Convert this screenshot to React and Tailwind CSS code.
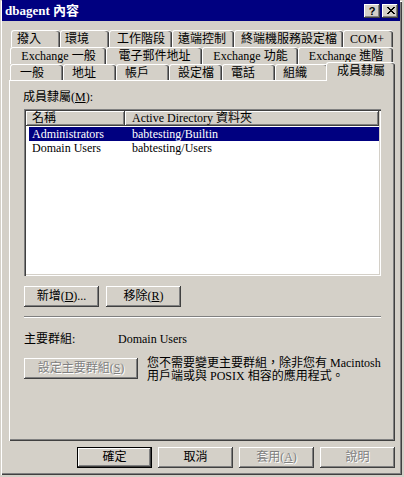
import React from "react";

const RAISED =
  "bg-[#d4d0c8] shadow-[inset_-1px_-1px_0_#404040,inset_1px_1px_0_#ffffff,inset_-2px_-2px_0_#808080,inset_2px_2px_0_#d4d0c8]";
const DEFAULT_BTN =
  "bg-[#d4d0c8] shadow-[inset_0_0_0_1px_#000000,inset_-2px_-2px_0_#404040,inset_2px_2px_0_#ffffff,inset_-3px_-3px_0_#808080]";
const DISABLED = "text-[#808080] [text-shadow:1px_1px_0_#ffffff]";
const TAB =
  "h-[17px] shrink-0 bg-[#d4d0c8] border-t border-l border-white rounded-t-[3px] shadow-[inset_-1px_0_0_#404040,inset_-2px_0_0_#808080] leading-[14px] pt-[1px] whitespace-nowrap";

function Tab({ cls, children }) {
  return <div className={`${TAB} ${cls}`}>{children}</div>;
}

function Btn({ cls, children }) {
  return (
    <div className={`h-[21px] shrink-0 flex items-center justify-center leading-[13px] whitespace-nowrap ${cls}`}>
      {children}
    </div>
  );
}

function CloseGlyph() {
  const px = [
    [0, 0], [1, 0], [6, 0], [7, 0],
    [1, 1], [2, 1], [5, 1], [6, 1],
    [2, 2], [3, 2], [4, 2], [5, 2],
    [3, 3], [4, 3],
    [2, 4], [3, 4], [4, 4], [5, 4],
    [1, 5], [2, 5], [5, 5], [6, 5],
    [0, 6], [1, 6], [6, 6], [7, 6],
  ];
  return (
    <svg width="8" height="7" viewBox="0 0 8 7" shapeRendering="crispEdges">
      {px.map(([x, y], i) => (
        <rect key={i} x={x} y={y} width="1" height="1" fill="#000" />
      ))}
    </svg>
  );
}

export default function App() {
  return (
    <div className="w-[404px] h-[477px] bg-[#d4d0c8] text-[12px] text-black [font-family:'Liberation_Serif','Noto_Sans_CJK_TC',serif] overflow-hidden">
      <div className="w-[402px] h-[475px] flex flex-col px-[2px] shadow-[inset_1px_1px_0_#d4d0c8,inset_2px_2px_0_#ffffff,inset_-1px_-1px_0_#404040,inset_-2px_-2px_0_#808080]">
        {/* Title bar */}
        <div className="h-[21px] shrink-0 bg-[#000080] flex items-center pl-[3px] pr-[2px]">
          <span className="text-white font-bold text-[13px] leading-[15px] whitespace-nowrap">
            dbagent 內容
          </span>
          <div className="ml-auto flex gap-[2px]">
            <div className={`w-[16px] h-[14px] flex items-center justify-center ${RAISED}`}>
              <span className="[font-family:'Liberation_Sans',sans-serif] font-bold text-[11px] leading-[11px] pt-[1px]">?</span>
            </div>
            <div className={`w-[16px] h-[14px] flex items-center justify-center pl-[1px] ${RAISED}`}>
              <CloseGlyph />
            </div>
          </div>
        </div>

        {/* Tabs row 1 */}
        <div className="flex h-[17px] ml-[9px] mt-[9px] shrink-0">
          <Tab cls="w-[49px] pl-[5px]">撥入</Tab>
          <Tab cls="w-[49px] pl-[4px]">環境</Tab>
          <Tab cls="w-[63px] pl-[7px]">工作階段</Tab>
          <Tab cls="w-[62px] pl-[5px]">遠端控制</Tab>
          <Tab cls="w-[109px] pl-[6px]">終端機服務設定檔</Tab>
          <Tab cls="w-[50px] pl-[6px]">COM+</Tab>
        </div>
        {/* Tabs row 2 */}
        <div className="flex h-[17px] ml-[8px] shrink-0">
          <Tab cls="w-[96px] text-center">Exchange 一般</Tab>
          <Tab cls="w-[96px] text-center">電子郵件地址</Tab>
          <Tab cls="w-[96px] text-center">Exchange 功能</Tab>
          <Tab cls="w-[95px] text-center">Exchange 進階</Tab>
        </div>
        {/* Tabs row 3 */}
        <div className="flex items-start h-[16px] ml-[8px] shrink-0">
          <Tab cls="w-[53px] pl-[9px]">一般</Tab>
          <Tab cls="w-[53px] pl-[8px]">地址</Tab>
          <Tab cls="w-[53px] pl-[8px]">帳戶</Tab>
          <Tab cls="w-[53px] pl-[8px]">設定檔</Tab>
          <Tab cls="w-[53px] pl-[8px]">電話</Tab>
          <Tab cls="w-[53px] pl-[7px]">組織</Tab>
          <div className="relative z-10 -ml-[2px] -mt-[2px] w-[69px] h-[19px] shrink-0 bg-[#d4d0c8] border-t border-l border-white rounded-t-[3px] shadow-[inset_-1px_0_0_#404040,inset_-2px_0_0_#808080] pl-[10px] leading-[14px] pt-[1px] whitespace-nowrap">
            成員隸屬
          </div>
        </div>

        {/* Panel */}
        <div className="ml-[7px] w-[386px] h-[361px] shrink-0 flex flex-col px-[15px] shadow-[inset_1px_1px_0_#ffffff,inset_-1px_-1px_0_#404040,inset_-2px_-2px_0_#808080]">
          <div className="mt-[11px] h-[13px] leading-[13px] -ml-[1px] whitespace-nowrap">
            成員隸屬(<span className="underline">M</span>):
          </div>

          {/* List view */}
          <div className="mt-[5px] w-[357px] h-[167px] shrink-0 bg-white p-[2px] flex flex-col shadow-[inset_1px_1px_0_#808080,inset_2px_2px_0_#404040,inset_-1px_-1px_0_#ffffff,inset_-2px_-2px_0_#d4d0c8]">
            <div className="flex h-[15px] shrink-0">
              <div className={`w-[99px] pl-[6px] leading-[15px] whitespace-nowrap ${RAISED}`}>名稱</div>
              <div className={`flex-1 pl-[7px] leading-[15px] whitespace-nowrap ${RAISED}`}>
                Active Directory 資料夾
              </div>
            </div>
            <div className="mt-[1px] ml-[3px] flex h-[14px] leading-[14px] bg-[#000080] text-white whitespace-nowrap">
              <div className="w-[99px] pl-[3px]">Administrators</div>
              <div className="pl-[4px]">babtesting/Builtin</div>
            </div>
            <div className="ml-[3px] flex h-[14px] leading-[14px] whitespace-nowrap">
              <div className="w-[99px] pl-[3px]">Domain Users</div>
              <div className="pl-[4px]">babtesting/Users</div>
            </div>
          </div>

          <div className="mt-[10px] flex gap-[7px]">
            <Btn cls={`w-[75px] ${RAISED}`}>
              新增(<span className="underline">D</span>)...
            </Btn>
            <Btn cls={`w-[75px] ${RAISED}`}>
              移除(<span className="underline">R</span>)
            </Btn>
          </div>

          <div className="mt-[9px] w-[357px] h-[2px] shrink-0 border-t border-b border-t-[#808080] border-b-white" />

          <div className="mt-[15px] h-[13px] leading-[13px] flex whitespace-nowrap">
            <span className="w-[94px]">主要群組:</span>
            <span>Domain Users</span>
          </div>

          <div className="mt-[12px] flex items-start">
            <Btn cls={`w-[114px] ${RAISED}`}>
              <span className={DISABLED}>
                設定主要群組(<span className="underline">S</span>)
              </span>
            </Btn>
            <div className="ml-[9px] -mt-[1px] leading-[13px] whitespace-nowrap">
              您不需要變更主要群組，除非您有 Macintosh
              <br />
              用戶端或與 POSIX 相容的應用程式。
            </div>
          </div>
        </div>

        {/* Dialog buttons */}
        <div className="ml-[7px] w-[386px] mt-[6px] flex justify-end gap-[6px] shrink-0">
          <Btn cls={`w-[75px] ${DEFAULT_BTN}`}>確定</Btn>
          <Btn cls={`w-[75px] ${RAISED}`}>取消</Btn>
          <Btn cls={`w-[75px] ${RAISED}`}>
            <span className={DISABLED}>
              套用(<span className="underline">A</span>)
            </span>
          </Btn>
          <Btn cls={`w-[75px] ${RAISED}`}>
            <span className={DISABLED}>說明</span>
          </Btn>
        </div>
      </div>
    </div>
  );
}
